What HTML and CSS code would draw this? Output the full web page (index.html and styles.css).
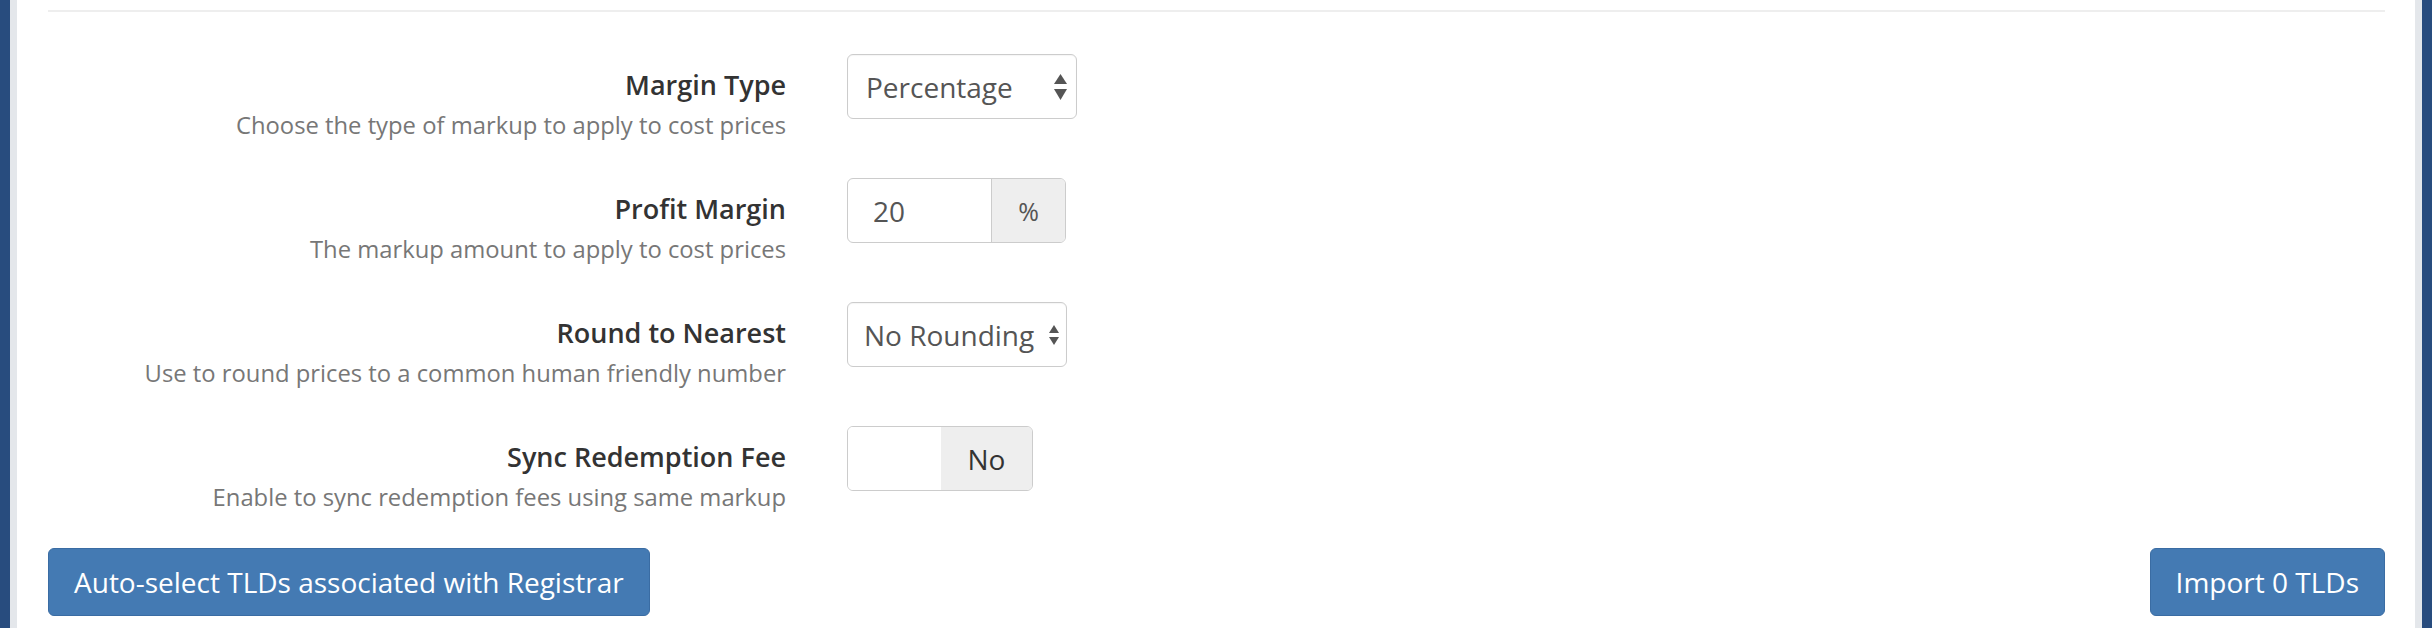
FILE: index.html
```html
<!DOCTYPE html>
<html lang="en">

<head>
    <meta charset="UTF-8">
    <title>TLD Import Settings</title>
    <link rel="stylesheet" href="styles.css">
</head>

<body>
    <div class="frame">
        <div class="edge-dark"></div>
        <div class="edge-light"></div>

        <div class="content">
            <hr class="divider">

            <div class="settings">
                <div class="setting-row">
                    <div class="setting-text">
                        <div class="setting-label">Margin Type</div>
                        <div class="setting-help">Choose the type of markup to apply to cost prices</div>
                    </div>
                    <div class="select select-wide">
                        <span>Percentage</span>
                        <svg class="arrows" width="13" height="26" viewBox="0 0 13 26">
                            <polygon points="6.5,0 13,10 0,10" />
                            <polygon points="0,15 13,15 6.5,26" />
                        </svg>
                    </div>
                </div>

                <div class="setting-row">
                    <div class="setting-text">
                        <div class="setting-label">Profit Margin</div>
                        <div class="setting-help">The markup amount to apply to cost prices</div>
                    </div>
                    <div class="input-group">
                        <div class="input-value">20</div>
                        <div class="input-addon">%</div>
                    </div>
                </div>

                <div class="setting-row">
                    <div class="setting-text">
                        <div class="setting-label">Round to Nearest</div>
                        <div class="setting-help">Use to round prices to a common human friendly number</div>
                    </div>
                    <div class="select select-narrow">
                        <span>No Rounding</span>
                        <svg class="arrows" width="10" height="20" viewBox="0 0 10 20">
                            <polygon points="5,0 10,8 0,8" />
                            <polygon points="0,12 10,12 5,20" />
                        </svg>
                    </div>
                </div>

                <div class="setting-row">
                    <div class="setting-text">
                        <div class="setting-label">Sync Redemption Fee</div>
                        <div class="setting-help">Enable to sync redemption fees using same markup</div>
                    </div>
                    <div class="toggle">
                        <div class="toggle-handle"></div>
                        <div class="toggle-off">No</div>
                    </div>
                </div>
            </div>

            <div class="actions">
                <button class="btn">Auto-select TLDs associated with Registrar</button>
                <button class="btn">Import 0 TLDs</button>
            </div>
        </div>

        <div class="edge-light"></div>
        <div class="edge-dark"></div>
    </div>
</body>
</html>
```

FILE: styles.css
```css
body {
    margin: 0;
    font-family: "Open Sans", "Liberation Sans", sans-serif;
    background-color: #fff;
}

.frame {
    display: flex;
    height: 100vh;
}

.edge-dark {
    width: 10px;
    background-color: #284c7e;
}

.edge-light {
    width: 7px;
    background-color: #e4e7eb;
}

.content {
    flex: 1;
    padding: 0 30px 0 31px;
    background-color: #fff;
}

.divider {
    margin: 10px 0 0;
    border: 0;
    height: 2px;
    background-color: #eee;
}

.settings {
    display: flex;
    flex-direction: column;
    gap: 32px;
    margin-top: 42px;
}

.setting-row {
    display: grid;
    grid-template-columns: 738px auto;
    column-gap: 61px;
    align-items: start;
    justify-content: start;
}

.setting-text {
    text-align: right;
    padding-top: 10px;
}

.setting-label {
    font-size: 27px;
    font-weight: 600;
    line-height: 41px;
    color: #333;
}

.setting-help {
    font-size: 23.8px;
    line-height: 41px;
    color: #777;
}

/* form controls */
.select,
.input-group,
.toggle {
    box-sizing: border-box;
    height: 65px;
    border: 1px solid #ccc;
    border-radius: 6px;
    font-size: 28px;
    color: #555;
}

.select {
    display: flex;
    align-items: center;
    justify-content: space-between;
    padding: 0 9px 0 18px;
    box-shadow: inset 0 1px 1px rgba(0, 0, 0, 0.04);
}

.select-wide {
    width: 230px;
}

.select-narrow {
    width: 220px;
    padding: 0 7px 0 16px;
}

.arrows {
    flex: none;
    fill: #555;
}

.input-group {
    display: flex;
    width: 219px;
    overflow: hidden;
}

.input-value {
    width: 144px;
    display: flex;
    align-items: center;
    padding-left: 25px;
    box-sizing: border-box;
    border-right: 1px solid #ccc;
}

.input-addon {
    flex: 1;
    display: flex;
    align-items: center;
    justify-content: center;
    background-color: #eee;
    font-size: 25px;
}

.toggle {
    display: flex;
    width: 186px;
    overflow: hidden;
}

.toggle-handle {
    width: 93px;
    background-color: #fff;
}

.toggle-off {
    flex: 1;
    display: flex;
    align-items: center;
    justify-content: center;
    background-color: #eee;
    color: #333;
}

.actions {
    display: flex;
    justify-content: space-between;
    margin-top: 30px;
}

.btn {
    height: 68px;
    padding: 0 25px;
    font-family: "Open Sans", "Liberation Sans", sans-serif;
    font-size: 28px;
    color: #fff;
    background-color: #447ab3;
    border: 1px solid #3a6ca3;
    border-radius: 6px;
}
```
